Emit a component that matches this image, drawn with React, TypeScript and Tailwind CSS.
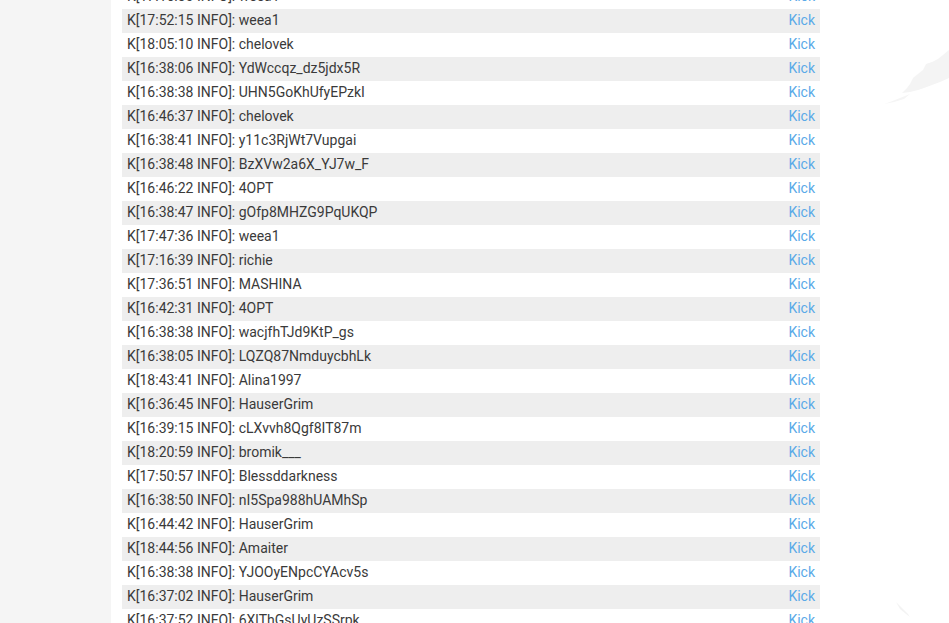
import React from "react";

type LogRow = { time: string; nick: string };

const rows: LogRow[] = [
  { time: "17:16:30", nick: "weea1" },
  { time: "17:52:15", nick: "weea1" },
  { time: "18:05:10", nick: "chelovek" },
  { time: "16:38:06", nick: "YdWccqz_dz5jdx5R" },
  { time: "16:38:38", nick: "UHN5GoKhUfyEPzkI" },
  { time: "16:46:37", nick: "chelovek" },
  { time: "16:38:41", nick: "y11c3RjWt7Vupgai" },
  { time: "16:38:48", nick: "BzXVw2a6X_YJ7w_F" },
  { time: "16:46:22", nick: "4OPT" },
  { time: "16:38:47", nick: "gOfp8MHZG9PqUKQP" },
  { time: "17:47:36", nick: "weea1" },
  { time: "17:16:39", nick: "richie" },
  { time: "17:36:51", nick: "MASHINA" },
  { time: "16:42:31", nick: "4OPT" },
  { time: "16:38:38", nick: "wacjfhTJd9KtP_gs" },
  { time: "16:38:05", nick: "LQZQ87NmduycbhLk" },
  { time: "18:43:41", nick: "Alina1997" },
  { time: "16:36:45", nick: "HauserGrim" },
  { time: "16:39:15", nick: "cLXvvh8Qgf8IT87m" },
  { time: "18:20:59", nick: "bromik___" },
  { time: "17:50:57", nick: "Blessddarkness" },
  { time: "16:38:50", nick: "nI5Spa988hUAMhSp" },
  { time: "16:44:42", nick: "HauserGrim" },
  { time: "18:44:56", nick: "Amaiter" },
  { time: "16:38:38", nick: "YJOOyENpcCYAcv5s" },
  { time: "16:37:02", nick: "HauserGrim" },
  { time: "16:37:52", nick: "6XlThGsUyUzSSrpk" },
];

const App: React.FC = () => {
  return (
    <div className="relative w-[949px] h-[623px] overflow-hidden bg-white flex font-['Roboto',sans-serif]">
      {/* sidebar */}
      <div className="w-[111px] shrink-0 h-full bg-[#f5f5f5]" />

      {/* player log */}
      <div className="w-[720px] shrink-0 h-full bg-white pl-[11px]">
        <div className="-mt-[15px] w-[698px] flex flex-col">
          {rows.map((r, i) => (
            <div
              key={i}
              className={`h-6 flex items-center justify-between px-[5px] pb-[2px] text-sm ${i % 2 === 1 ? "bg-[#eeeeee]" : "bg-white"}`}
            >
              <span className="text-[#3a3a3a]">
                K[{r.time} INFO]: {r.nick}
              </span>
              <a className="text-[#5aaae8] cursor-pointer">Kick</a>
            </div>
          ))}
        </div>
      </div>

      {/* brush strokes on the backdrop */}
      <svg className="absolute left-[880px] top-[30px]" width="69" height="90" viewBox="0 0 69 90">
        <path
          d="M69 20 L63 25 L58 29 L52 32 L46 34 L43 40 L38 44 L33 48 L30 54 L27 58 L22 63 L30 62 L38 60 L44 58 L52 55 L60 52 L69 48 Z"
          fill="#f4f4f4"
        />
        <path d="M30 64 L20 68 L10 72 L4 74 L14 72 L24 69 Z" fill="#f5f5f5" />
      </svg>
      <svg className="absolute left-[880px] top-[560px]" width="69" height="63" viewBox="0 0 69 63">
        <path d="M16 42 L22 48 L28 54 L30 57 L26 54 L20 49 Z" fill="#f3f3f3" />
      </svg>
    </div>
  );
};

export default App;
